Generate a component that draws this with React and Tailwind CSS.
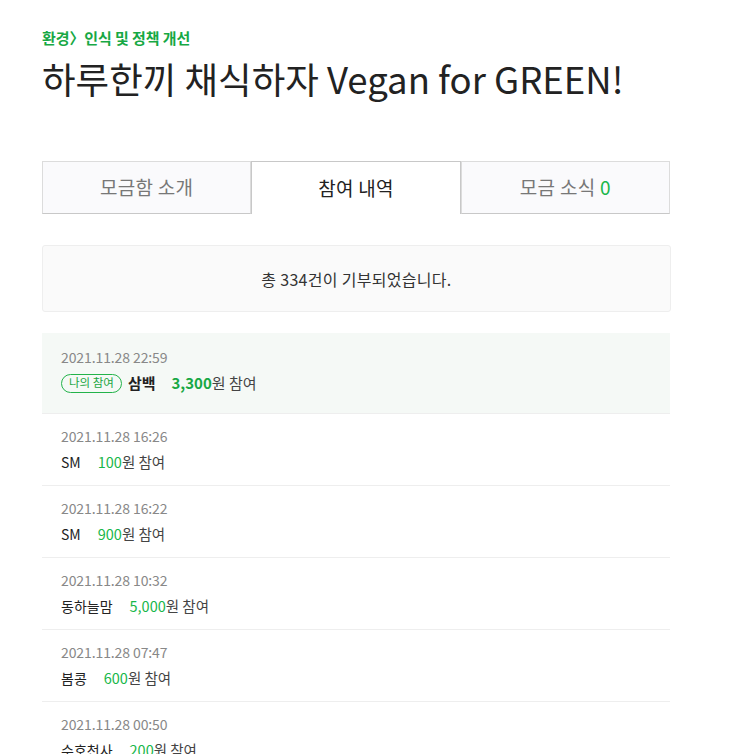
const FONT = { fontFamily: '"Noto Sans CJK KR", "Noto Sans", sans-serif' };

const history = [
  { date: '2021.11.28 22:59', name: '삼백', amount: '3,300', mine: true },
  { date: '2021.11.28 16:26', name: 'SM', amount: '100' },
  { date: '2021.11.28 16:22', name: 'SM', amount: '900' },
  { date: '2021.11.28 10:32', name: '동하늘맘', amount: '5,000' },
  { date: '2021.11.28 07:47', name: '봄콩', amount: '600' },
  { date: '2021.11.28 00:50', name: '수호천사', amount: '200' },
];

function Tabs() {
  return (
    <div className="mt-[59px] flex h-[53px] w-[628px]">
      <div className="flex flex-1 items-center justify-center border border-[#dcdcdc] border-b-[#c8c8c8] bg-[#fafafc] text-[19px] tracking-[0.3px] text-[#777]">
        모금함 소개
      </div>
      <div className="flex flex-1 items-center justify-center border-x border-t border-[#c8c8c8] bg-white text-[19px] tracking-[0.3px] text-[#222]">
        참여 내역
      </div>
      <div className="flex flex-1 items-center justify-center border border-[#dcdcdc] border-b-[#c8c8c8] bg-[#fafafc] text-[19px] tracking-[0.3px] text-[#777]">
        모금 소식&nbsp;<span className="text-[#19b74b]">0</span>
      </div>
    </div>
  );
}

function HistoryItem({ item, first }) {
  return (
    <li
      className={
        first
          ? 'border-b border-[#eeeeee] bg-[#f5f9f6] px-[19px] pt-[14px] pb-[20px]'
          : 'border-b border-[#eeeeee] px-[19px] pt-[12px] pb-[13px]'
      }
    >
      <div className="text-[14px] leading-[20px] tracking-[-0.1px] text-[#888]">{item.date}</div>
      <div className="mt-[6px] flex h-[20px] items-center text-[14px] leading-[20px] text-[#222]">
        {item.mine && (
          <span className="mr-[6px] flex h-[19px] items-center rounded-full border border-[#23b34a] px-[7px] text-[11.5px] leading-none text-[#1aa543]">
            나의 참여
          </span>
        )}
        <span className={item.mine ? 'text-[15px] font-bold' : ''}>{item.name}</span>
        <span className={item.mine ? 'ml-[16px] text-[15px]' : 'ml-[17px] text-[14.5px]'}>
          <span className={item.mine ? 'font-bold text-[#17a844]' : 'text-[#19b74b]'}>{item.amount}</span>
          <span className="text-[#444]">원 참여</span>
        </span>
      </div>
    </li>
  );
}

export default function App() {
  return (
    <div className="min-h-screen bg-white" style={FONT}>
      <div className="px-[42px] pt-[27px]">
        {/* Category */}
        <div className="text-[15px] font-bold leading-[22px] tracking-[-0.1px] text-[#17a844]">
          환경〉인식 및 정책 개선
        </div>
        {/* Title */}
        <h1 className="mt-[7px] text-[36.5px] font-normal leading-[46px] tracking-[0px] text-[#222]">
          하루한끼 채식하자 Vegan for GREEN!
        </h1>

        <Tabs />

        {/* Summary */}
        <div className="mt-[31px] flex h-[67px] w-[629px] items-center justify-center rounded-[3px] border border-[#eeeeee] bg-[#fafafa] text-[16px] tracking-[0.3px] text-[#333]">
          총 334건이 기부되었습니다.
        </div>

        {/* Donation list */}
        <ul className="mt-[21px] w-[628px]">
          {history.map((item, i) => (
            <HistoryItem key={i} item={item} first={i === 0} />
          ))}
        </ul>
      </div>
    </div>
  );
}
